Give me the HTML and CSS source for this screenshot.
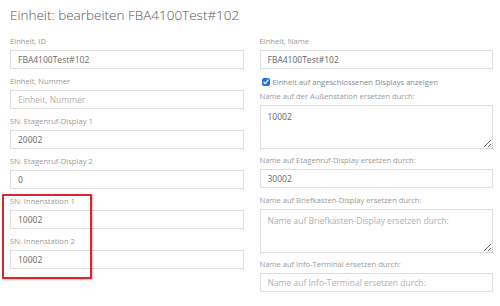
FILE: index.html
```html
<!DOCTYPE html>
<html lang="de">
<head>
    <meta charset="UTF-8">
    <meta name="viewport" content="width=device-width, initial-scale=1.0">
    <title>Einheit bearbeiten</title>
    <link rel="stylesheet" href="styles.css">
</head>
<body>
    <div class="page">
        <h1>Einheit: bearbeiten FBA4100Test#102</h1>

        <div class="columns">
            <!-- linke Spalte -->
            <div class="col">
                <div class="form-group">
                    <label for="unitId">Einheit, ID</label>
                    <input type="text" id="unitId" value="FBA4100Test#102">
                </div>
                <div class="form-group">
                    <label for="unitNumber">Einheit, Nummer</label>
                    <input type="text" id="unitNumber" placeholder="Einheit, Nummer">
                </div>
                <div class="form-group">
                    <label for="snFloor1">SN. Etagenruf-Display 1</label>
                    <input type="text" id="snFloor1" value="20002">
                </div>
                <div class="form-group">
                    <label for="snFloor2">SN. Etagenruf-Display 2</label>
                    <input type="text" id="snFloor2" value="0">
                </div>
                <div class="form-group">
                    <label for="snIndoor1">SN. Innenstation 1</label>
                    <input type="text" id="snIndoor1" value="10002">
                </div>
                <div class="form-group">
                    <label for="snIndoor2">SN. Innenstation 2</label>
                    <input type="text" id="snIndoor2" value="10002">
                </div>
            </div>

            <!-- rechte Spalte -->
            <div class="col">
                <div class="form-group">
                    <label for="unitName">Einheit, Name</label>
                    <input type="text" id="unitName" value="FBA4100Test#102">
                </div>
                <div class="check-row">
                    <input type="checkbox" id="showUnit" checked>
                    <label for="showUnit">Einheit auf angeschlossenen Displays anzeigen</label>
                </div>
                <div class="form-group area">
                    <label for="nameOutdoor">Name auf der Außenstation ersetzen durch:</label>
                    <textarea id="nameOutdoor">10002</textarea>
                </div>
                <div class="form-group">
                    <label for="nameFloor">Name auf Etagenruf-Display ersetzen durch:</label>
                    <input type="text" id="nameFloor" value="30002">
                </div>
                <div class="form-group area">
                    <label for="nameMailbox">Name auf Briefkasten-Display ersetzen durch:</label>
                    <textarea id="nameMailbox" placeholder="Name auf Briefkasten-Display ersetzen durch:"></textarea>
                </div>
                <div class="form-group">
                    <label for="nameInfo">Name auf Info-Terminal ersetzen durch:</label>
                    <input type="text" id="nameInfo" placeholder="Name auf Info-Terminal ersetzen durch:">
                </div>
            </div>
        </div>

        <!-- Markierung -->
        <div class="highlight"></div>
    </div>
</body>
</html>
```

FILE: styles.css
```css
body {
    margin: 0;
    background: #fff;
    font-family: "Open Sans", Arial, sans-serif;
    color: #555;
}
.page {
    position: relative;
    padding: 6px 7px 0 10px;
}
h1 {
    margin: 0 0 12px;
    font-size: 13.5px;
    font-weight: 300;
    line-height: 18px;
    color: #555;
}
.columns {
    display: grid;
    grid-template-columns: 1fr 1fr;
    column-gap: 16px;
}
.form-group {
    margin-bottom: 7px;
}
.form-group.area {
    margin-bottom: 6px;
}
.form-group label {
    display: block;
    margin-bottom: 3px;
    font-size: 7.6px;
    line-height: 11px;
    color: #999;
}
input[type="text"], textarea {
    display: block;
    width: 100%;
    height: 19px;
    padding: 0 7px;
    border: 1px solid #ddd;
    border-radius: 0;
    box-sizing: border-box;
    font-family: inherit;
    font-size: 8.5px;
    color: #666;
    background: #fff;
}
textarea {
    height: 44px;
    padding: 5px 7px;
    line-height: 11px;
    resize: vertical;
}
::placeholder {
    color: #b0b0b0;
}
.check-row {
    display: flex;
    align-items: center;
    gap: 3px;
    height: 11px;
    margin: 2px 0 4px 2px;
    font-size: 7.6px;
    color: #888;
}
.check-row input {
    width: 8px;
    height: 8px;
    margin: 0;
    accent-color: #1a73e8;
}
.highlight {
    position: absolute;
    left: 2px;
    top: 194px;
    width: 86px;
    height: 81px;
    border: 2px solid #d9262c;
    border-radius: 1px;
    box-shadow: 1px 1px 2px rgba(0,0,0,0.25);
}
```
